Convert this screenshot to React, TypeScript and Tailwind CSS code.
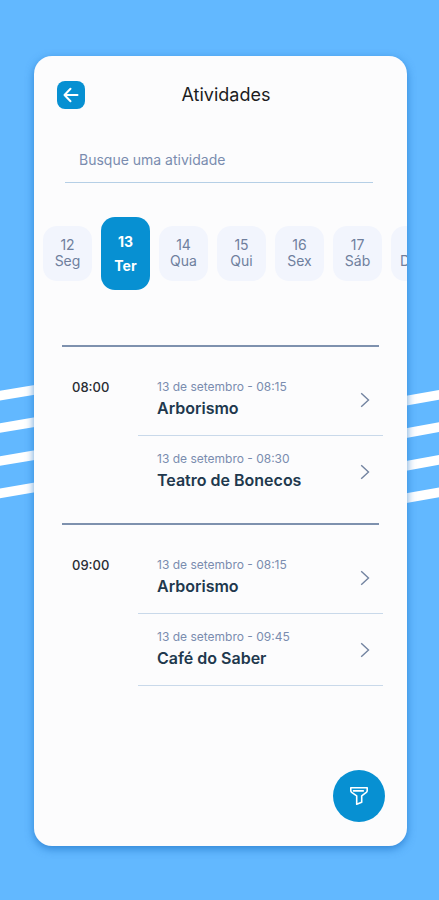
import { useState } from "react";

interface Evento {
  data: string;
  nome: string;
}

interface Horario {
  hora: string;
  eventos: Evento[];
}

const dias = [
  { numero: "12", nome: "Seg" },
  { numero: "13", nome: "Ter" },
  { numero: "14", nome: "Qua" },
  { numero: "15", nome: "Qui" },
  { numero: "16", nome: "Sex" },
  { numero: "17", nome: "Sáb" },
  { numero: "18", nome: "Dom" },
];

const horarios: Horario[] = [
  {
    hora: "08:00",
    eventos: [
      { data: "13 de setembro - 08:15", nome: "Arborismo" },
      { data: "13 de setembro - 08:30", nome: "Teatro de Bonecos" },
    ],
  },
  {
    hora: "09:00",
    eventos: [
      { data: "13 de setembro - 08:15", nome: "Arborismo" },
      { data: "13 de setembro - 09:45", nome: "Café do Saber" },
    ],
  },
];

const Seta = () => (
  <svg width="16" height="16" viewBox="0 0 16 16" fill="none" stroke="white" strokeWidth="2" strokeLinecap="round" strokeLinejoin="round" aria-hidden="true">
    <path d="M14.5 8H1.5M7.5 1.8L1.5 8l6 6.2" />
  </svg>
);

const Chevron = () => (
  <svg width="10" height="16" viewBox="0 0 10 16" fill="none" stroke="#7283a0" strokeWidth="1.4" aria-hidden="true">
    <path d="M1.2 1.2L8.5 8l-7.3 6.800" />
  </svg>
);

const Funil = () => (
  <svg width="20" height="20" viewBox="0 0 20 20" fill="none" stroke="white" strokeWidth="1.6" strokeLinejoin="round" strokeLinecap="round" aria-hidden="true">
    <path d="M1.8 1.8h16.4v2.6c0 .8-.3 1.4-.9 1.9l-4.6 3.5v6.4l-5 2V9.8l-5-3.5c-.6-.5-.9-1.1-.9-1.9z" />
    <path d="M4.5 4.9h9.8" />
  </svg>
);

// Faixas brancas que passam por trás do cartão
const Faixas = () => (
  <svg
    className="absolute inset-x-0 top-[380px] h-[130px] w-full"
    viewBox="0 0 439 130"
    preserveAspectRatio="none"
    fill="none"
    stroke="white"
    strokeWidth="9.6"
    aria-hidden="true"
  >
    <path d="M-6 16.7L40 9M-6 49L40 41.3M-6 82L40 74.3M-6 114.3L40 106.6" />
    <path d="M400 21.8L446 13.5M400 54.2L446 45.9M400 87L446 78.7M400 119.3L446 111" />
  </svg>
);

const App = () => {
  const [diaAtivo, setDiaAtivo] = useState("13");
  const [busca, setBusca] = useState("");

  return (
    <div className="relative flex min-h-screen flex-col bg-[#62b8ff] pt-14 pr-8 pb-[54px] pl-[34px] font-['Inter',sans-serif]">
      <Faixas />

      <main className="relative flex flex-1 flex-col overflow-hidden rounded-[18px] bg-[#fcfcfd] shadow-[0_3px_9px_#1c6fc4b0]">
        <header className="flex items-center pt-[25px] pr-10 pl-[23px]">
          <button
            type="button"
            aria-label="Voltar"
            className="flex size-7 items-center justify-center rounded-lg bg-[#0790d2]"
          >
            <Seta />
          </button>
          <h1 className="flex-1 text-center text-lg leading-7 text-[#1c1c1e]">Atividades</h1>
        </header>

        <div className="mt-[39px] mr-[34px] ml-[31px]">
          <input
            type="text"
            aria-label="Busque uma atividade"
            placeholder="Busque uma atividade"
            value={busca}
            onChange={(e) => setBusca(e.target.value)}
            className="block w-full border-b border-[#b5cfe6] px-[14px] pb-[10px] text-sm leading-6 text-[#2b3b4e] placeholder:text-[#7a8caf] focus:outline-none"
          />
        </div>

        <div className="mt-[34px] flex items-center gap-[9px] overflow-hidden pl-[9px]">
          {dias.map((dia) => (
            <button
              key={dia.numero}
              type="button"
              aria-pressed={dia.numero === diaAtivo}
              onClick={() => setDiaAtivo(dia.numero)}
              className={
                dia.numero === diaAtivo
                  ? "h-[73px] w-[49px] shrink-0 rounded-[14px] bg-[#0790d2] text-sm leading-6 font-bold text-white"
                  : "h-[55px] w-[49px] shrink-0 rounded-[14px] bg-[#f2f5fd] pb-[2px] text-sm leading-4 text-[#6f7f9d]"
              }
            >
              <span className="block">{dia.numero}</span>
              <span className="block">{dia.nome}</span>
            </button>
          ))}
        </div>

        <div className="mt-[55px] mr-6 ml-7">
          {horarios.map((horario, i) => (
            <section key={horario.hora} className="mb-4">
              <hr className="mr-1 border-t-2 border-[#7e91ae]" />
              <div className="flex pt-[17px]">
                <h2 className="w-[76px] pt-[15px] pl-[10px] text-[13px] leading-4 font-medium text-[#2a2d33]">
                  {horario.hora}
                </h2>
                <ul className="flex-1">
                  {horario.eventos.map((evento, j) => (
                    <li
                      key={j}
                      className={
                        i < horarios.length - 1 && j === horario.eventos.length - 1
                          ? ""
                          : "border-b border-[#c9d9ea]"
                      }
                    >
                      <a href="#" className="flex h-[71px] items-center justify-between pr-[13px] pl-[19px]">
                        <span className="flex flex-col gap-px pb-1">
                          <span className="text-xs leading-5 text-[#7a8caf]">{evento.data}</span>
                          <span className="text-base leading-5 font-semibold text-[#21384d]">
                            {evento.nome}
                          </span>
                        </span>
                        <Chevron />
                      </a>
                    </li>
                  ))}
                </ul>
              </div>
            </section>
          ))}
        </div>

        <button
          type="button"
          aria-label="Filtrar"
          className="mt-auto mr-[22px] mb-6 flex size-[52px] items-center justify-center self-end rounded-full bg-[#0790d2]"
        >
          <Funil />
        </button>
      </main>
    </div>
  );
};

export default App;
